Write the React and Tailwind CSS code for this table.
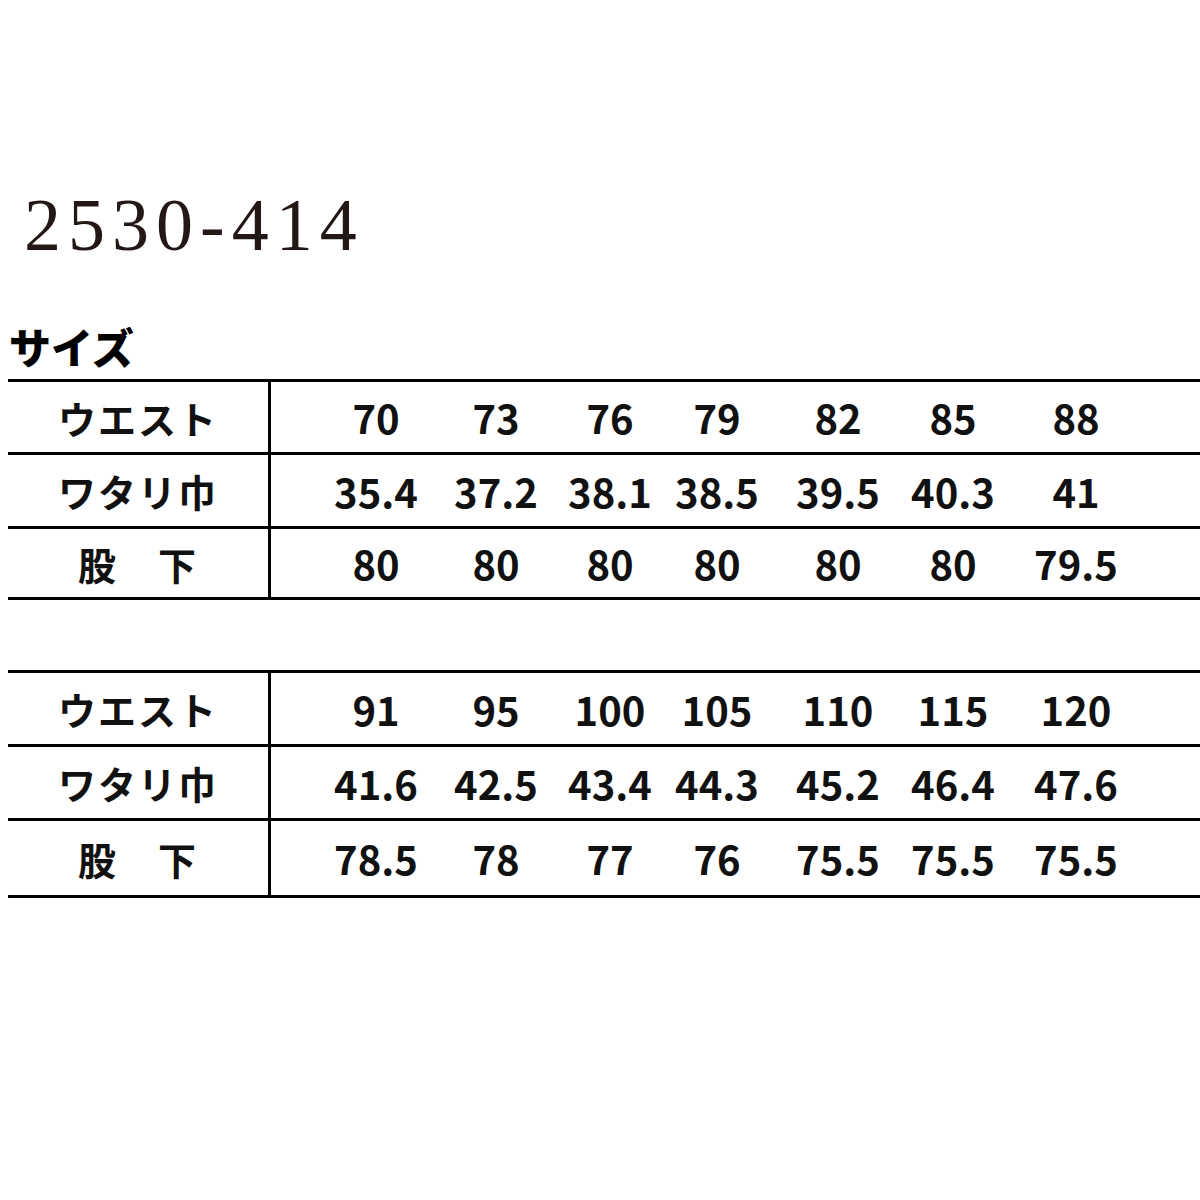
import React from 'react';

const gaps = ['ml-[55px]', 'ml-[20px]', 'ml-[14px]', 'ml-[7px]', 'ml-[21px]', 'ml-[15px]', 'ml-[23px]'];

const tables = [
    {
        heights: ['h-[73px]', 'h-[74px]', 'h-[71px]'],
        rows: [
            ['ウエスト', ['70', '73', '76', '79', '82', '85', '88']],
            ['ワタリ巾', ['35.4', '37.2', '38.1', '38.5', '39.5', '40.3', '41']],
            ['股　下', ['80', '80', '80', '80', '80', '80', '79.5']],
        ],
    },
    {
        heights: ['h-[74px]', 'h-[74px]', 'h-[77px]'],
        rows: [
            ['ウエスト', ['91', '95', '100', '105', '110', '115', '120']],
            ['ワタリ巾', ['41.6', '42.5', '43.4', '44.3', '45.2', '46.4', '47.6']],
            ['股　下', ['78.5', '78', '77', '76', '75.5', '75.5', '75.5']],
        ],
    },
];

const SizeTable = ({ table }) => (
    <div className="ml-[8px] border-t-[3px] border-black">
        {table.rows.map(([label, values], i) => (
            <div key={i} className={`flex items-stretch border-b-[3px] border-black ${table.heights[i]}`}>
                {/* Label column */}
                <div className="w-[263px] shrink-0 border-r-[3px] border-black flex items-center justify-center text-[38px] font-bold tracking-[2px] text-[#111]">
                    {label}
                </div>
                {/* Size values */}
                {values.map((v, j) => (
                    <div key={j} className={`w-[100px] shrink-0 flex items-center justify-center text-[40px] font-semibold text-[#111] ${gaps[j]}`}>
                        {v}
                    </div>
                ))}
            </div>
        ))}
    </div>
);

export default function App() {
    return (
        <div className="w-[1200px] h-[1200px] bg-white overflow-hidden font-['Noto_Sans_CJK_JP',sans-serif]">
            <div className="pt-[188px] pl-[24px] text-[74px] leading-none tracking-[7px] text-[#231815] font-['Liberation_Serif',serif]">
                2530-414
            </div>
            <div className="mt-[63px] pl-[9px] text-[42px] leading-none font-black text-black">
                サイズ
            </div>
            <div className="mt-[12px]">
                <SizeTable table={tables[0]} />
            </div>
            <div className="mt-[70px]">
                <SizeTable table={tables[1]} />
            </div>
        </div>
    );
}
